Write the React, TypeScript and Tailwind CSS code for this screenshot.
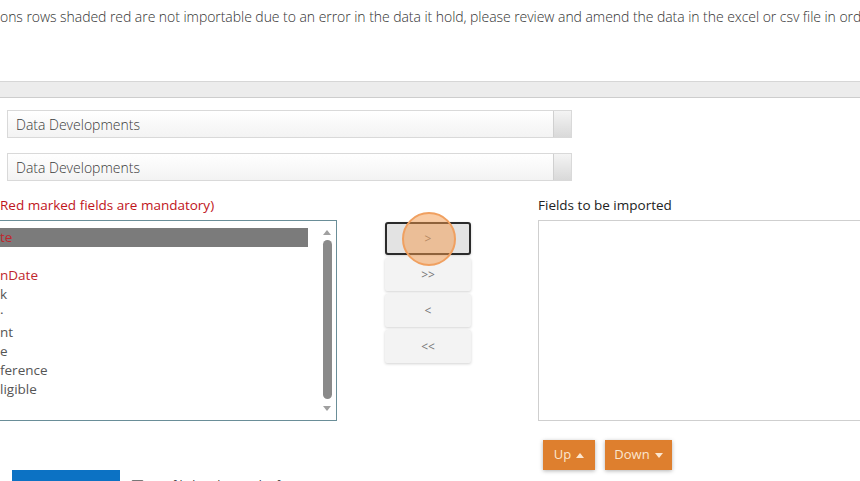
import { useState } from "react";

const fields = [
  { name: "te", red: true },
  { name: "", red: false },
  { name: "nDate", red: true },
  { name: "k", red: false },
  { name: "·", red: false },
  { name: "nt", red: false },
  { name: "e", red: false },
  { name: "ference", red: false },
  { name: "ligible", red: false },
];

function SelectBox({ value }: { value: string }) {
  return (
    <div className="ml-[7px] flex h-[28px] w-[565px] border border-[#d9d9d9] bg-gradient-to-b from-white to-[#f3f3f3]">
      <div className="flex flex-1 items-center pl-[8px] text-[14px] font-light text-[#3a3a3a]">{value}</div>
      <div className="w-[18px] border-l border-[#d0d0d0] bg-gradient-to-b from-[#f4f4f4] to-[#d9d9d9]" />
    </div>
  );
}

function MoveButton({ label, active }: { label: string; active?: boolean }) {
  return (
    <button
      className={
        "flex h-[33px] w-[86px] items-center justify-center text-[12px] text-[#777] shadow-[0_1px_3px_rgba(0,0,0,0.18)] " +
        (active ? "rounded-[3px] border-2 border-[#2b2b2b] bg-[#e3e3e3]" : "rounded-[2px] bg-[#f3f3f3]")
      }
    >
      {label}
    </button>
  );
}

export default function App() {
  const [selected] = useState(0);

  return (
    <div className="relative h-[481px] w-[860px] overflow-hidden bg-white font-['Open_Sans',sans-serif] text-[#333]">
      <div className="whitespace-nowrap pt-[7px] text-[14px] font-light tracking-[-0.05px] leading-[20px] text-[#333]">
        ons rows shaded red are not importable due to an error in the data it hold, please review and amend the data in the excel or csv file in order to import them
      </div>

      <div className="mt-[54px] h-[17px] border-y border-t-[#d6d6d6] border-b-[#cdcdcd] bg-[#ececec]" />

      <div className="mt-[12px] flex flex-col gap-[15px]">
        <SelectBox value="Data Developments" />
        <SelectBox value="Data Developments" />
      </div>

      <div className="mt-[14px] flex">
        <div className="w-[337px]">
          <div className="h-[25px] text-[13.5px] leading-[20px] text-[#c0141b]">Red marked fields are mandatory)</div>
          <div className="relative h-[201px] border border-l-0 border-[#6a8e98] pt-[7px]">
            {fields.map((f, i) => (
              <div
                key={i}
                className={
                  "h-[19px] w-[308px] text-[13.5px] leading-[19px] " +
                  (i === selected ? "bg-[#7b7b7b] " : "") +
                  (f.red ? "text-[#c0262d]" : "text-[#555]")
                }
              >
                {f.name}
              </div>
            ))}
            <div className="absolute right-[3px] top-0 flex h-full w-[12px] flex-col items-center py-[7px]">
              <svg width="10" height="8" viewBox="0 0 10 8" className="mb-[4px]">
                <path d="M1 7 L5 2 L9 7 Z" fill="#a0a0a0" />
              </svg>
              <div className="w-[9px] flex-1 rounded-full bg-[#8a8a8a]" />
              <svg width="10" height="8" viewBox="0 0 10 8" className="mt-[6px]">
                <path d="M1 1 L5 6 L9 1 Z" fill="#a0a0a0" />
              </svg>
            </div>
          </div>
        </div>

        <div className="relative ml-[48px] mt-[27px] flex w-[86px] flex-col gap-[3px]">
          <MoveButton label=">" active />
          <MoveButton label=">>" />
          <MoveButton label="<" />
          <MoveButton label="<<" />
          <div className="pointer-events-none absolute left-[17px] top-[-10px] h-[54px] w-[54px] rounded-full border-2 border-[#f0a060] bg-[#f39a4c]/50" />
        </div>

        <div className="ml-[67px] flex-1">
          <div className="h-[25px] text-[13.5px] leading-[20px] text-[#222]">Fields to be imported</div>
          <div className="h-[201px] border border-r-0 border-[#cfcfcf]" />
          <div className="ml-[5px] mt-[19px] flex gap-[10px]">
            <button className="flex h-[30px] w-[52px] items-center justify-center gap-[5px] bg-[#de7f2e] text-[13px] text-[#fbe6d0] shadow-[0_1px_4px_rgba(0,0,0,0.3)]">
              Up
              <svg width="8" height="5" viewBox="0 0 8 5"><path d="M0 5 L4 0 L8 5 Z" fill="#fbe6d0" /></svg>
            </button>
            <button className="flex h-[30px] w-[67px] items-center justify-center gap-[5px] bg-[#de7f2e] text-[13px] text-[#fbe6d0] shadow-[0_1px_4px_rgba(0,0,0,0.3)]">
              Down
              <svg width="8" height="5" viewBox="0 0 8 5"><path d="M0 0 L4 5 L8 0 Z" fill="#fbe6d0" /></svg>
            </button>
          </div>
        </div>
      </div>

      <div className="absolute left-[12px] top-[470px] h-[20px] w-[108px] bg-[#0c72c4]" />
      <div className="absolute left-[131px] top-[477px] flex items-center gap-[6px]">
        <div className="h-[13px] w-[13px] rounded-[2px] border border-[#777] bg-[#888]" />
        <div className="text-[12px] text-[#333]">Are file headers in the first row?</div>
      </div>
    </div>
  );
}
